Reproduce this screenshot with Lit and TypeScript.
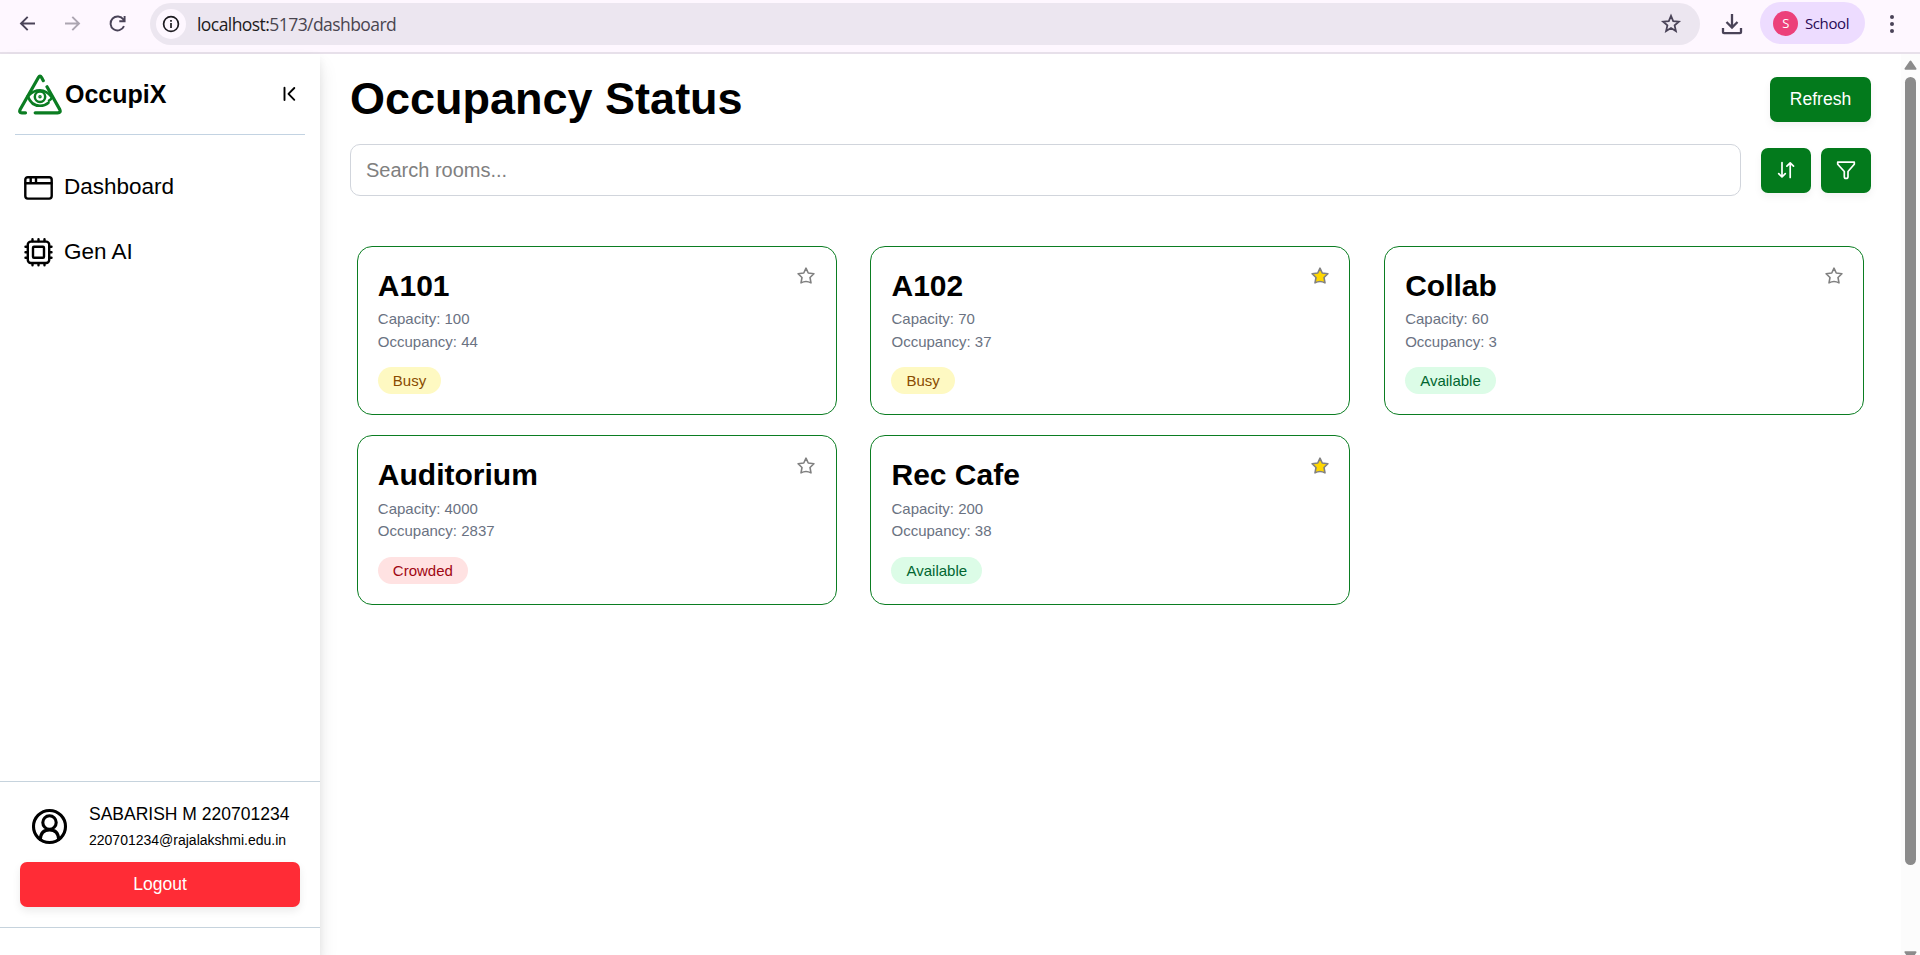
import { LitElement, html, svg, css } from "lit";
import { customElement, property } from "lit/decorators.js";

interface Room {
  name: string;
  capacity: number;
  occupancy: number;
  status: "Busy" | "Available" | "Crowded";
  favorite: boolean;
}

const ROOMS: Room[] = [
  { name: "A101", capacity: 100, occupancy: 44, status: "Busy", favorite: false },
  { name: "A102", capacity: 70, occupancy: 37, status: "Busy", favorite: true },
  { name: "Collab", capacity: 60, occupancy: 3, status: "Available", favorite: false },
  { name: "Auditorium", capacity: 4000, occupancy: 2837, status: "Crowded", favorite: false },
  { name: "Rec Cafe", capacity: 200, occupancy: 38, status: "Available", favorite: true },
];

const STAR = "M12 2.6l2.7 5.8 6.8.9-4.700 4.500 1.200 6.500q-3-1.700-6-1.700t-6 1.700l1.200-6.500L2.500 9.300l6.800-.9z";

@customElement("browser-bar")
class BrowserBar extends LitElement {
  static styles = css`
    :host { display: flex; align-items: flex-start; box-sizing: border-box; height: 54px; background: #fef7ff; border-bottom: 2px solid #e7e0ea; padding: 3px 24px 0 15px; color: #4a4358; font-family: "Open Sans", "Noto Sans", sans-serif; }
    svg { display: block; fill: none; stroke: currentColor; }
    .nav { display: flex; gap: 20px; padding: 8px 0 0 0; width: 135px; box-sizing: border-box; }
    .off { color: #aca5b1; }
    .url { flex: 1; display: flex; align-items: center; height: 42px; border-radius: 21px; background: #ece6f0; padding: 0 18px 0 6px; }
    .info { width: 30px; height: 30px; border-radius: 50%; background: #fef7ff; display: grid; place-items: center; color: #1d1b20; }
    .address { flex: 1; margin-left: 11px; font-size: 17.5px; line-height: 24px; color: #1d1b20; letter-spacing: -0.56px; white-space: nowrap; }
    .path { color: #49454f; }
    .download { margin: 9px 16px 0 20px; }
    .profile { display: flex; align-items: center; height: 42px; width: 105px; box-sizing: border-box; border-radius: 21px; background: #eddcff; padding-left: 13px; color: #280a55; font-size: 15px; letter-spacing: -0.4px; margin-top: -1px; }
    .avatar { width: 25px; height: 25px; border-radius: 50%; background: #ec407a; color: #fff; display: grid; place-items: center; font-size: 13px; margin-right: 7px; }
    .dots { margin: 8px 0 0 23px; }
  `;
  render() {
    return html`
      <div class="nav">
        <svg width="25" height="25" viewBox="0 0 25 25" stroke-width="1.9"><path d="M20 12.5H6.5M12.7 5.8L6 12.5l6.7 6.7"/></svg>
        <svg class="off" width="25" height="25" viewBox="0 0 25 25" stroke-width="1.9"><path d="M5 12.5h13.5M12.3 5.8l6.7 6.7-6.7 6.7"/></svg>
        <svg width="25" height="25" viewBox="0 0 25 25" stroke-width="1.9"><path d="M19 15.2A7 7 0 1 1 18.4 8.6L19.4 10M19.6 5v5.3h-5.3"/></svg>
      </div>
      <div class="url">
        <div class="info"><svg width="18" height="18" viewBox="0 0 18 18" stroke-width="1.7"><circle cx="9" cy="9" r="7.4"/><path d="M9 8v5M9 5v1.8"/></svg></div>
        <div class="address">localhost:<span class="path">5173/dashboard</span></div>
        <svg width="22" height="22" viewBox="0 0 22 22" stroke-width="1.8"><path d="M11 2.8l2.2 5.3 5.7.5-4.3 3.8 1.3 5.6-4.9-3-4.9 3 1.3-5.6L3.100 8.600l5.700-.5z"/></svg>
      </div>
      <svg class="download" width="24" height="24" viewBox="0 0 24 24" stroke-width="2.300"><path d="M12 2v13M6.500 10l5.500 5.500 5.500-5.500M3 16v4.200q0 1 1 1h16q1 0 1-1V16"/></svg>
      <div class="profile"><span class="avatar">S</span>School</div>
      <svg class="dots" width="8" height="26" viewBox="0 0 8 26"><g fill="#4a4358" stroke="none"><circle cx="4" cy="6" r="2"/><circle cx="4" cy="13" r="2"/><circle cx="4" cy="20" r="2"/></g></svg>
    `;
  }
}

@customElement("side-bar")
class SideBar extends LitElement {
  static styles = css`
    :host { display: flex; flex-direction: column; width: 320px; flex: none; box-sizing: border-box; background: #fff; box-shadow: 0 5px 8px rgba(0, 0, 0, 0.07), 0 12px 19px rgba(0, 0, 0, 0.09); color: #000; position: relative; }
    svg { display: block; fill: none; stroke: currentColor; stroke-linecap: round; stroke-linejoin: round; }
    .brand { display: flex; align-items: center; height: 80px; margin: 0 15px; border-bottom: 1px solid #c3d3e2; padding: 0 8px 0 3px; }
    .name { flex: 1; font-size: 25px; font-weight: 700; margin-left: 3px; }
    .logo { color: #0b7d22; }
    .menu { flex: 1; display: flex; flex-direction: column; gap: 35px; padding: 37px 24px; }
    .link { display: flex; align-items: center; gap: 11px; height: 30px; font-size: 22.5px; }
    .account { box-sizing: border-box; border-top: 1px solid #c6d3dd; border-bottom: 1px solid #c6d3dd; height: 147px; padding: 14px 20px 0; }
    .user { display: flex; align-items: center; height: 60px; padding-left: 11px; gap: 21px; margin-bottom: 6px; }
    .who { font-size: 17.5px; line-height: 26px; white-space: nowrap; padding-top: 2px; }
    .mail { font-size: 14px; line-height: 26px; }
    .logout { display: block; width: 100%; height: 45px; border: 0; border-radius: 7px; background: #ff2c36; color: #fff; font: 500 17.5px "Liberation Sans", Arial, sans-serif; box-shadow: 0 4px 8px rgba(0, 0, 0, 0.08); padding: 0; }
    .foot { height: 27px; }
  `;
  render() {
    return html`
      <div class="brand">
        <svg class="logo" width="44" height="42" viewBox="0 0 44 42" stroke-width="3.200">
          <path d="M25.300 7.700L23.600 4.500q-1.600-2.800-3.200 0L2.300 36.300q-1.700 3.500 1.500 3.500H7.500M17.200 39.800H39.700q3.600 0 2-3.400L29 13.800"/>
          <path stroke-width="2.600" d="M10.800 22.500Q15.500 17.300 22 17.300T34 24.500"/>
          <path stroke-width="2.600" d="M9.800 23Q13 32.800 22 32.800q5 0 8.500-3.100M34 24.500q-1 2-3 3.200"/>
          <circle cx="22" cy="23.700" r="5.200" stroke-width="2.500"/><circle cx="22" cy="23.700" r="1.100" stroke-width="1.300"/>
        </svg>
        <div class="name">OccupiX</div>
        <svg width="15" height="16" viewBox="0 0 15 16" stroke-width="1.900"><path d="M2.500 1.800v12.200M12.300 2L6.500 7.900l5.800 5.900"/></svg>
      </div>
      <div class="menu">
        <div class="link">
          <svg width="29" height="30" viewBox="0 0 29 30" stroke-width="2.400"><rect x="1.300" y="5.200" width="26.400" height="21.400" rx="2.500"/><path d="M1.500 11.200h26M6.700 5.500v5M12 5.500v5"/></svg>
          Dashboard
        </div>
        <div class="link">
          <svg width="29" height="30" viewBox="0 0 29 30" stroke-width="2.400"><rect x="3.800" y="4.600" width="21.400" height="21.400" rx="3"/><rect x="9" y="9.800" width="11" height="11" rx="1"/><path d="M8.500 4V2.300M14.500 4V2.300M20.500 4V2.300M8.500 28.300v-2M14.500 28.300v-2M20.500 28.300v-2M3.500 9.800H1.500M3.500 15.300H1.500M3.500 20.800H1.500M27.500 9.800h-2M27.500 15.300h-2M27.500 20.800h-2"/></svg>
          Gen AI
        </div>
      </div>
      <div class="account">
        <div class="user">
          <svg width="37" height="37" viewBox="0 0 37 37" stroke-width="3.100"><circle cx="18.500" cy="18.500" r="16"/><circle cx="18.500" cy="14.500" r="6.700"/><path d="M9.300 31.500C9.600 25 13.200 21.900 18.500 21.900s8.900 3.100 9.200 9.600"/></svg>
          <div><div class="who">SABARISH M 220701234</div><div class="mail">220701234@rajalakshmi.edu.in</div></div>
        </div>
        <button class="logout">Logout</button>
      </div>
      <div class="foot"></div>
    `;
  }
}

@customElement("room-card")
class RoomCard extends LitElement {
  @property({ attribute: false }) room!: Room;
  static styles = css`
    :host { display: flex; justify-content: space-between; align-items: flex-start; box-sizing: border-box; width: 480px; height: 169.4px; border: 1px solid #0b7d22; border-radius: 15px; padding: 20px; }
    h2 { margin: 0; font-size: 30px; line-height: 37.5px; font-weight: 700; color: #000; }
    .line { font-size: 15px; line-height: 22.5px; color: #6a7282; }
    .first { margin-top: 3.7px; }
    .badge { display: inline-block; margin-top: 14px; height: 27px; padding: 0 15px; border-radius: 14px; font-size: 15px; line-height: 27px; }
    .busy { background: #fef9c2; color: #894b00; }
    .available { background: #dcfce7; color: #016630; }
    .crowded { background: #ffe2e2; color: #9f0712; }
    .star { display: block; width: 20px; height: 20px; margin: -0.7px -0.6px 0 0; stroke: #808080; stroke-width: 1.900; stroke-linejoin: round; fill: none; }
    .star.on { fill: #ffd700; }
  `;
  render() {
    const r = this.room;
    return html`
      <div>
        <h2>${r.name}</h2>
        <div class="line first">Capacity: ${r.capacity}</div>
        <div class="line">Occupancy: ${r.occupancy}</div>
        <span class="badge ${r.status.toLowerCase()}">${r.status}</span>
      </div>
      <svg class="star ${r.favorite ? "on" : ""}" viewBox="0 0 24 24">${svg`<path d=${STAR}></path>`}</svg>
    `;
  }
}

@customElement("app-root")
class AppRoot extends LitElement {
  static styles = css`
    :host { display: flex; flex-direction: column; height: 955px; overflow: hidden; background: #fff; font-family: "Liberation Sans", Arial, sans-serif; }
    .body { flex: 1; display: flex; min-height: 0; }
    main { flex: 1; padding: 23px 30px 0; }
    .head { display: flex; justify-content: space-between; height: 45px; }
    h1 { margin: 0; font-size: 45px; line-height: 43px; font-weight: 700; color: #000; }
    button { height: 45px; border: 0; border-radius: 7px; background: #037a1c; color: #fff; font: 500 17.5px "Liberation Sans", Arial, sans-serif; box-shadow: 0 4px 8px rgba(0, 0, 0, 0.05); padding: 0; }
    .refresh { width: 101px; }
    .tools { display: flex; align-items: center; gap: 10px; margin-top: 22px; }
    .search { flex: 1; box-sizing: border-box; height: 52px; border: 1px solid #d1d5dc; border-radius: 10px; padding: 0 15px; font: 20px "Liberation Sans", Arial, sans-serif; margin-right: 10px; background: #fff; }
    .search::placeholder { color: #808080; opacity: 1; }
    .square { width: 50px; display: grid; place-items: center; }
    .square svg { fill: none; stroke: #fff; stroke-width: 1.700; stroke-linecap: round; stroke-linejoin: round; }
    .rooms { display: grid; grid-template-columns: repeat(3, 1fr); gap: 20px; justify-items: center; margin-top: 50px; }
    .scroll { width: 19px; flex: none; background: #fcfcfc; display: flex; flex-direction: column; align-items: center; padding-top: 6px; box-sizing: border-box; }
    .scroll svg { display: block; fill: #8b8b8b; stroke: #8b8b8b; stroke-linejoin: round; stroke-width: 2; flex: none; }
    .thumb { width: 11px; height: 788px; border-radius: 6px; background: #8b8b8b; margin: 7px 0 86px; flex: none; }
  `;
  render() {
    return html`
      <browser-bar></browser-bar>
      <div class="body">
        <side-bar></side-bar>
        <main>
          <div class="head"><h1>Occupancy Status</h1><button class="refresh">Refresh</button></div>
          <div class="tools">
            <input class="search" placeholder="Search rooms..." />
            <button class="square" aria-label="Sort"><svg width="20" height="20" viewBox="0 0 20 20"><path d="M6 2.500v14.300M2.700 13.600L6 17l3.300-3.400M14.200 17.500V3M10.900 6.200l3.300-3.400 3.300 3.400"/></svg></button>
            <button class="square" aria-label="Filter"><svg width="20" height="20" viewBox="0 0 20 20"><path d="M1.700 2.200h16.600v2L12 11.500v5.200q0 1.700-2 1.700-1.700 0-1.700-1.700v-5.200L1.700 4.200z"/></svg></button>
          </div>
          <div class="rooms">${ROOMS.map((r) => html`<room-card .room=${r}></room-card>`)}</div>
        </main>
        <div class="scroll">
          <svg width="13" height="10" viewBox="0 0 13 10"><path d="M6.500 1.500L11.500 8.800h-10z"/></svg>
          <div class="thumb"></div>
          <svg width="13" height="10" viewBox="0 0 13 10"><path d="M1.500 1.200h10L6.500 8.500z"/></svg>
        </div>
      </div>
    `;
  }
}
